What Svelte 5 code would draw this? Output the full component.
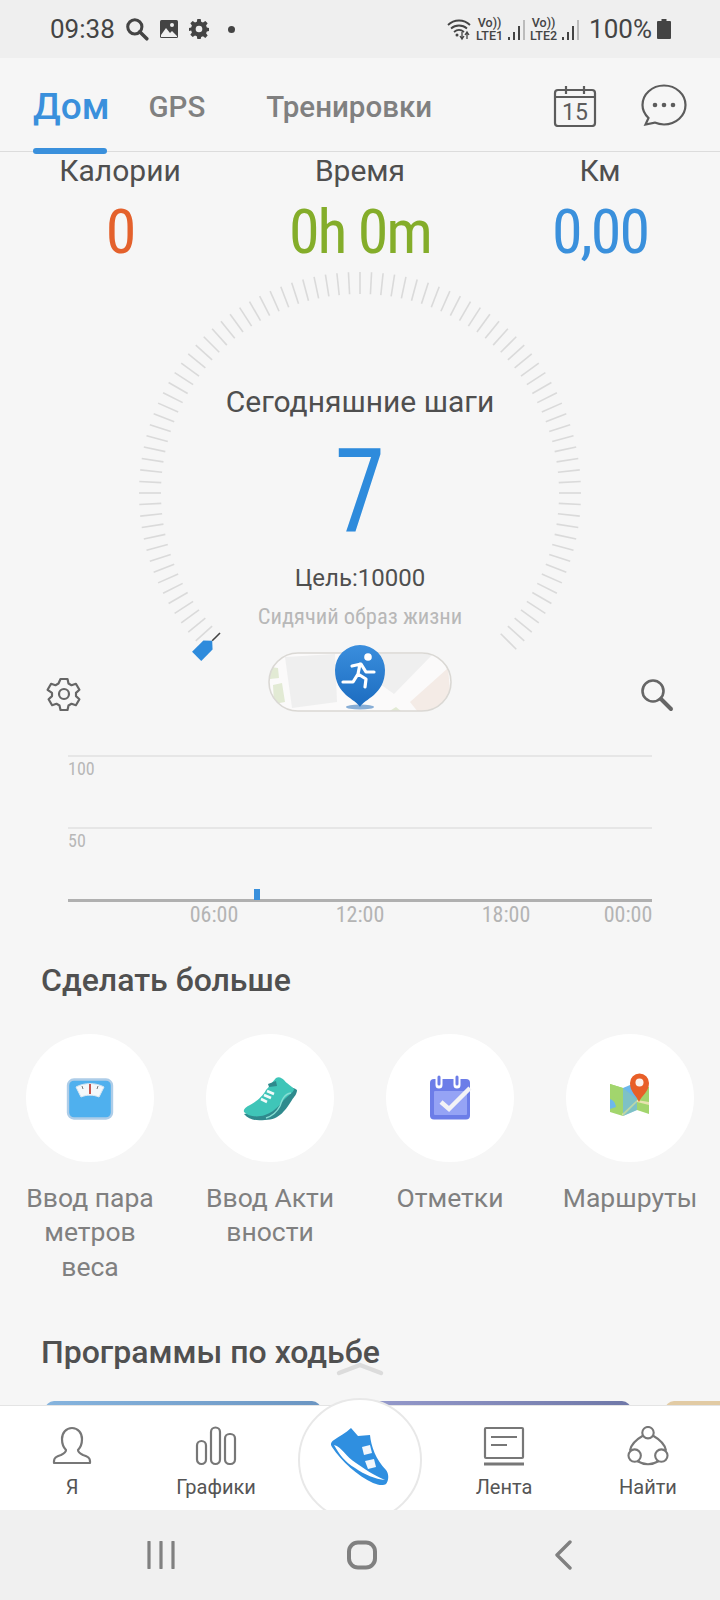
<script>
  const ticks = [];
  for (let a = -132; a <= 135; a += 3) ticks.push(a);

  const stats = [
    { label: 'Калории', value: '0', color: '#e4612c' },
    { label: 'Время', value: '0h 0m', color: '#84ad2a' },
    { label: 'Км', value: '0,00', color: '#3a90dc' }
  ];

  const hours = [
    { label: '06:00', at: 146 },
    { label: '12:00', at: 292 },
    { label: '18:00', at: 438 },
    { label: '00:00', at: 560 }
  ];
</script>

<div class="phone">
  <div class="status">
    <span class="time">09:38</span>
    <svg class="st-ic" width="24" height="24" viewBox="0 0 22 22"><circle cx="9" cy="9" r="6.500" fill="none" stroke="#444" stroke-width="2.800"/><path d="M13.500 13.500 20 20" stroke="#444" stroke-width="3.200" stroke-linecap="round"/></svg>
    <svg class="st-ic" width="20" height="20" viewBox="0 0 20 20"><rect x="1" y="1" width="18" height="18" rx="1.500" fill="#444"/><circle cx="13" cy="6" r="2" fill="#efefef"/><path d="M2 16l5-7 4 5 2-2 5 5v1H2z" fill="#efefef"/></svg>
    <svg class="st-ic" width="20" height="20" viewBox="0 0 24 24"><path fill="#444" fill-rule="evenodd" d="M10 0h4l.6 3.300 2.200.9L19.600 2.300l2.800 2.800-1.900 2.800.9 2.200L24 10.700v3.600l-2.600.6-.9 2.200 1.900 2.800-2.800 2.800-2.800-1.900-2.200.9L14 24h-4l-.6-3.300-2.200-.9-2.800 1.900-2.800-2.800 1.900-2.800-.9-2.200L0 14.300v-3.600l2.600-.6.9-2.200-1.900-2.800 2.800-2.800 2.800 1.900 2.200-.9zM12 8a4 4 0 1 0 0 8 4 4 0 0 0 0-8z"/></svg>
    <span class="st-dot"></span>
    <span class="st-fill"></span>
    <svg width="24" height="24" viewBox="0 0 24 24"><g fill="none" stroke="#444" stroke-width="1.800"><path d="M1 8c6-6 16-6 22 0"/><path d="M4 11.500c4.500-4 11.500-4 16 0"/><path d="M7 15c3-2.500 7-2.500 10 0"/></g><circle cx="10" cy="18" r="1.500" fill="#444"/><path d="M15 15v6m-2-2 2 3 2-3M20 22v-6m-2 2 2-3 2 3" stroke="#444" stroke-width="1.300" fill="none"/></svg>
    <div class="lte lte1"><span>Vo))</span><span>LTE1</span></div>
    <div class="bars"><i style="height:3px"></i><i style="height:8px"></i><i style="height:14px"></i><i class="dim" style="height:20px"></i></div>
    <div class="lte lte2"><span>Vo))</span><span>LTE2</span></div>
    <div class="bars"><i style="height:3px"></i><i style="height:8px"></i><i style="height:14px"></i><i class="dim" style="height:20px"></i></div>
    <span class="pct">100%</span>
    <svg class="batt" width="14" height="20" viewBox="0 0 14 20"><path fill="#444" d="M4.500 0h5v2H13a1 1 0 0 1 1 1v16a1 1 0 0 1-1 1H1a1 1 0 0 1-1-1V3a1 1 0 0 1 1-1h3.500z"/></svg>
  </div>

  <header class="tabs">
    <span class="tab active">Дом</span>
    <span class="tab gps">GPS</span>
    <span class="tab train">Тренировки</span>
    <svg class="cal" width="44" height="42" viewBox="0 0 44 42">
      <rect x="2" y="5" width="40" height="36" rx="3" fill="none" stroke="#5c5c5c" stroke-width="2.200"/>
      <path d="M2 12h40" stroke="#5c5c5c" stroke-width="2"/>
      <path d="M13 1v8M31 1v8M18 5h8" stroke="#5c5c5c" stroke-width="2.200"/>
      <text x="22" y="35" text-anchor="middle" class="cal-num">15</text>
    </svg>
    <svg class="chat" width="46" height="42" viewBox="0 0 46 42">
      <path d="M23 1.500c12 0 21.500 8.800 21.500 19.500S35 40.500 23 40.500c-3.500 0-6.500-.7-9.300-1.900L4.500 40.500l3-6.500C3.700 30.400 1.500 25.800 1.500 21 1.500 10.300 11 1.500 23 1.500z" fill="none" stroke="#5c5c5c" stroke-width="2.200"/>
      <circle cx="14" cy="21" r="2.300" fill="#5c5c5c"/><circle cx="23" cy="21" r="2.300" fill="#5c5c5c"/><circle cx="32" cy="21" r="2.300" fill="#5c5c5c"/>
    </svg>
  </header>

  <main class="content">
    <section class="stats">
      {#each stats as s}
        <div class="stat">
          <div class="stat-label">{s.label}</div>
          <div class="stat-value" style="color:{s.color}">{s.value}</div>
        </div>
      {/each}
    </section>

    <section class="gauge">
      <svg class="dial" width="460" height="400" viewBox="-230 -231 460 400">
        {#each ticks as a}
          <line x1="0" y1="-199" x2="0" y2="-221" stroke="#dadada" stroke-width="1.600" transform="rotate({a})"/>
        {/each}
        <g transform="rotate(-135)">
          <path d="M-6.500 -231 L6.500 -231 L6.500 -215 L0 -209 L-6.500 -215 Z" fill="#2e8bdc"/>
          <line x1="0" y1="-209" x2="0" y2="-198" stroke="#444" stroke-width="1.600"/>
        </g>
      </svg>
      <div class="g-title">Сегодняшние шаги</div>
      <div class="g-steps">7</div>
      <div class="g-goal">Цель:10000</div>
      <div class="g-level">Сидячий образ жизни</div>
    </section>

    <section class="tools">
      <svg class="tool-ic" width="36" height="36" viewBox="0 0 36 36"><path fill="none" stroke="#666" stroke-width="2.200" stroke-linejoin="round" d="M14.500 3h7l1 4.500 3 1.700 4.400-1.400 3.500 6-3.400 3.100v3.200l3.400 3.100-3.500 6-4.400-1.400-3 1.700-1 4.500h-7l-1-4.500-3-1.700-4.400 1.400-3.500-6 3.400-3.100v-3.200L1.600 13.800l3.500-6 4.400 1.400 3-1.700z"/><circle cx="18" cy="18" r="5" fill="none" stroke="#666" stroke-width="2.200"/></svg>
      <div class="pill">
        <svg width="184" height="60" viewBox="0 0 184 60">
          <defs>
            <clipPath id="pillclip"><rect x="1" y="1" width="182" height="58" rx="29"/></clipPath>
            <linearGradient id="pinfill" x1="0" y1="0" x2="0" y2="1"><stop offset="0" stop-color="#3a8edd"/><stop offset="1" stop-color="#1c6cc0"/></linearGradient>
          </defs>
          <g clip-path="url(#pillclip)">
            <rect width="184" height="60" fill="#fbfafa"/>
            <path d="M2 15l8 1 1 10-9 1zM5 33l9-2 3 19-11 2z" fill="#e2ead4"/>
            <path d="M17 5l50-3 2 48-45 6z" fill="#efefef"/>
            <path d="M106 2h59l-39 40-14-10z" fill="#efefef"/>
            <path d="M142 50l38-34 4 44h-34z" fill="#f4ebe6"/>
            <path d="M120 60l8-5 6 5z" fill="#e2ead4"/>
          </g>
          <rect x="1" y="1" width="182" height="58" rx="29" fill="none" stroke="#dad8d4" stroke-width="1.600"/>
          <ellipse cx="92" cy="55" rx="14" ry="2.500" fill="#2a6fb8" opacity=".55"/>
          <path d="M92 55C88 47 67 43 67 18a25 25 0 0 1 50 0c0 25-21 29-25 37z" fill="url(#pinfill)"/>
          <circle cx="100" cy="5" r="3.800" fill="#fff"/>
          <path d="M75 30h10l5-8 8 5-1 8M84 14l9-2 5 8 8 0M92 12l-2 10" fill="none" stroke="#fff" stroke-width="3.200" stroke-linecap="round" stroke-linejoin="round"/>
        </svg>
      </div>
      <svg class="tool-ic" width="36" height="36" viewBox="0 0 36 36"><circle cx="15" cy="15" r="10.500" fill="none" stroke="#666" stroke-width="2.600"/><path d="M23 23l10 10" stroke="#666" stroke-width="4" stroke-linecap="round"/></svg>
    </section>

    <section class="chart">
      <div class="grid-line"><span>100</span></div>
      <div class="grid-line"><span>50</span></div>
      <div class="axis"><i class="bar"></i></div>
      <div class="hours">
        {#each hours as h}
          <span style="left:{h.at}px">{h.label}</span>
        {/each}
      </div>
    </section>

    <h2 class="more-title">Сделать больше</h2>
    <section class="more">
      <div class="more-item">
        <div class="round">
          <svg width="64" height="64" viewBox="0 0 64 64">
            <rect x="10" y="13.500" width="44" height="39" rx="6" fill="#4fb0ee" stroke="#aecde8" stroke-width="2.400"/>
            <path d="M18 21c8-4.500 20-4.500 28 0l-5 10c-6-2.500-12-2.500-18 0z" fill="#f4f8fb" stroke="#d7e6f1"/>
            <path d="M32 18v10" stroke="#c2443c" stroke-width="1.800"/>
            <path d="M24 20l1 3M40 20l-1 3" stroke="#777" stroke-width="1"/>
          </svg>
        </div>
        <div class="more-label">Ввод пара<br>метров<br>веса</div>
      </div>
      <div class="more-item">
        <div class="round">
          <svg width="64" height="64" viewBox="0 0 64 64">
            <path d="M44 20c5 2 10 0 15 4 0 4-3 7-5 10-6 9-12 20-27 20-9 1-16 0-21-6 12-1 28-12 38-28z" fill="#2f8a8d"/>
            <path d="M38 12c3-2 6 0 8 2 3 4 8 6 10 9 0 3-4 5-7 8-6 5-10 14-22 18-9 3-17 1-21-3-1-3 2-5 6-7 6-3 13-9 16-15 3-3 6-8 10-12z" fill="#3fc5b8"/>
            <path d="M53 27c-7 1-9 7-11 13-3 6-8 10-14 12" fill="none" stroke="#86ded3" stroke-width="1.400"/>
            <path d="M30 18l8-3 1 5-8 1z" fill="#2f8a8d"/>
            <path d="M29 25l7 3M26 29l7 3M23 33l6 3" stroke="#f2fbfa" stroke-width="2.600"/>
          </svg>
        </div>
        <div class="more-label">Ввод Акти<br>вности</div>
      </div>
      <div class="more-item">
        <div class="round">
          <svg width="64" height="64" viewBox="0 0 64 64">
            <rect x="12" y="13" width="40" height="40.500" rx="4" fill="#6c7de8"/>
            <rect x="16" y="25" width="33" height="24" rx="1" fill="#95a3f5"/>
            <path d="M21 10v9M39 10v9" stroke="#fff" stroke-width="7" stroke-linecap="round"/>
            <path d="M21 11v7M39 11v7" stroke="#6c7de8" stroke-width="3" stroke-linecap="round"/>
            <path d="M23 36l8 7 21-21" fill="none" stroke="#f3f3f6" stroke-width="4.500"/>
          </svg>
        </div>
        <div class="more-label">Отметки</div>
      </div>
      <div class="more-item">
        <div class="round">
          <svg width="64" height="64" viewBox="0 0 64 64">
            <path d="M12 18l13 4v28l-13-4z" fill="#a2d56d"/>
            <path d="M25 22l14-6v28l-14 6z" fill="#6db8ec"/>
            <path d="M12 30c4 0 8 4 13 3v-11l-13-4z" fill="#a2d56d"/>
            <path d="M12 33c3 1 5 3 6 8l-6 2z" fill="#6db8ec"/>
            <path d="M39 16l12 5v27l-12-4z" fill="#a2d56d"/>
            <path d="M25 50l14-14 12 3v-3l-12-2-15 14z" fill="#e8e3b0"/>
            <path d="M25 22v28l14-6V33z" fill="#8fc9a0" opacity=".5"/>
            <path d="M41 36C38 29 32 26 32 17a9.500 9.500 0 0 1 19 0c0 9-7 12-10 19z" fill="#e85f28"/>
            <circle cx="41.500" cy="16.500" r="4" fill="#fbf3ee"/>
          </svg>
        </div>
        <div class="more-label">Маршруты</div>
      </div>
    </section>

    <h2 class="prog-title">Программы по ходьбе</h2>
    <svg class="chevron" width="48" height="14" viewBox="0 0 48 14"><path d="M3 11 24 3l21 8" fill="none" stroke="#dcdcdc" stroke-width="4.500" stroke-linecap="round" stroke-linejoin="round"/></svg>
    <section class="cards">
      <div class="card c1"></div>
      <div class="card c2"></div>
      <div class="card c3"></div>
    </section>
  </main>

  <nav class="nav">
    <div class="nav-item">
      <svg width="40" height="40" viewBox="0 0 40 40"><path d="M20 2c6 0 10 5 10 11 0 5-2 9-4 11 0 2 1 3 5 5 4 1 7 3 7 6v2H2v-2c0-3 3-5 7-6 4-2 5-3 5-5-2-2-4-6-4-11C10 7 14 2 20 2z" fill="none" stroke="#777" stroke-width="2.200" stroke-linejoin="round"/></svg>
      <span>Я</span>
    </div>
    <div class="nav-item">
      <svg width="44" height="40" viewBox="0 0 44 40"><g fill="none" stroke="#777" stroke-width="2.200"><rect x="3" y="15" width="9" height="23" rx="4.500"/><rect x="17" y="1.500" width="9" height="36.500" rx="4.500"/><rect x="31" y="8" width="10" height="30" rx="4.500"/></g></svg>
      <span>Графики</span>
    </div>
    <div class="nav-item center">
      <span class="nav-circle"></span>
      <svg class="big-shoe" width="58" height="58" viewBox="0 0 58 58">
        <path d="M20 0l7 8 12-1c1 11 6 25 16 35 3 4 3 10 0 14-3 2-8 1-13-1C27 48 10 33 1 19c-2-3-1-5 2-7C8 8 15 5 20 0z" fill="#2f8fe0"/>
        <path d="M3 17c8 2 12 12 22 18 9 6 17 12 29 17-10-1-20-5-30-12C14 34 8 26 3 17z" fill="#fff"/>
        <path d="M31 19l8-2 2 8-8 2zM34 33l9-2 2 8-8 2z" fill="#f2f7fc"/>
      </svg>
    </div>
    <div class="nav-item">
      <svg width="42" height="40" viewBox="0 0 42 40"><g fill="none" stroke="#777" stroke-width="2.200"><rect x="2" y="2" width="38" height="30" rx="1"/><path d="M8 11h26M8 19h16"/></g><path d="M1 38h40" stroke="#777" stroke-width="3"/></svg>
      <span>Лента</span>
    </div>
    <div class="nav-item">
      <svg width="42" height="40" viewBox="0 0 44 42"><g fill="none" stroke="#777" stroke-width="2.200"><circle cx="22" cy="7" r="6"/><circle cx="8" cy="31" r="6.500"/><circle cx="36" cy="31" r="6.500"/><path d="M17 10C10 14 4 19 3 26M27 10c7 4 13 9 14 16M11 37c7 4 15 4 22 0"/></g></svg>
      <span>Найти</span>
    </div>
  </nav>

  <footer class="softkeys">
    <svg width="28" height="28" viewBox="0 0 28 28"><path d="M2 1v26M14 1v26M26 1v26" stroke="#808080" stroke-width="3.200" stroke-linecap="round"/></svg>
    <svg width="32" height="30" viewBox="0 0 32 30"><rect x="3" y="2.500" width="26" height="25" rx="9" fill="none" stroke="#808080" stroke-width="4"/></svg>
    <svg width="18" height="30" viewBox="0 0 18 30"><path d="M16 2 3 15l13 13" fill="none" stroke="#808080" stroke-width="3.400" stroke-linecap="round" stroke-linejoin="round"/></svg>
  </footer>
</div>

<style>
  :global(body) {
    background: #f6f6f6;
  }

  .phone {
    width: 720px;
    height: 1600px;
    display: flex;
    flex-direction: column;
    overflow: hidden;
    background: #f6f6f6;
    font-family: Roboto, "Noto Sans", sans-serif;
  }

  /* status bar */
  .status {
    height: 58px;
    flex: none;
    background: #efefef;
    display: flex;
    align-items: center;
    padding: 0 49px 0 50px;
    color: #444;
  }

  .time {
    font-size: 26px;
    margin-right: 10px;
  }

  .st-ic {
    margin-right: 10px;
  }

  .st-dot {
    width: 7px;
    height: 7px;
    border-radius: 50%;
    background: #444;
    margin-left: 9px;
  }

  .st-fill {
    flex: 1;
  }

  .lte {
    display: flex;
    flex-direction: column;
    align-items: center;
    font-size: 12.500px;
    line-height: 13px;
    font-weight: 500;
    margin-left: 5px;
  }

  .bars {
    display: flex;
    align-items: flex-end;
    gap: 3px;
    margin-left: 5px;
    height: 22px;
  }

  .bars i {
    width: 2px;
    background: #444;
  }

  .bars i.dim {
    background: #bbb;
  }

  .pct {
    font-size: 26px;
    margin-left: 10px;
  }

  .batt {
    margin-left: 5px;
  }

  /* tabs */
  .tabs {
    height: 94px;
    flex: none;
    display: flex;
    align-items: center;
    position: relative;
    border-bottom: 1px solid #dcdcdc;
    box-sizing: border-box;
    padding: 4px 33px 0 33px;
  }

  .tab {
    font-size: 32px;
    font-weight: 500;
    color: #808080;
    position: relative;
  }

  .tab.gps {
    font-size: 29.500px;
    margin-left: 39px;
  }

  .tab.train {
    font-size: 29.500px;
    margin-left: 61px;
  }

  .tab.active {
    font-size: 37px;
    color: #3a90dc;
  }

  .tab.active::after {
    content: "";
    position: absolute;
    left: 0;
    right: 2px;
    top: 63px;
    height: 6px;
    border-radius: 3px;
    background: #3a90dc;
  }

  .cal {
    margin-left: auto;
    transform: translateY(-1px);
  }

  .cal-num {
    font-size: 23px;
    font-family: Roboto, sans-serif;
    fill: #5c5c5c;
  }

  .chat {
    margin-left: 44px;
    transform: translateY(-2px);
  }

  .content {
    flex: 1;
    min-height: 0;
    overflow: hidden;
    display: flex;
    flex-direction: column;
    position: relative;
  }

  /* stats */
  .stats {
    display: grid;
    flex: none;
    grid-template-columns: repeat(3, 1fr);
    text-align: center;
    padding-top: 1px;
  }

  .stat-label {
    font-size: 30px;
    line-height: 36px;
    color: #4f4f4f;
  }

  .stat-value {
    font-size: 62px;
    line-height: 70px;
    margin-top: 8px;
    font-stretch: 75%;
    letter-spacing: -2px;
  }

  /* gauge */
  .gauge {
    position: relative;
    height: 384.500px;
    flex: none;
    display: flex;
    flex-direction: column;
    align-items: center;
  }

  .dial {
    position: absolute;
    left: 130px;
    top: -5px;
  }

  .g-title {
    font-size: 30px;
    line-height: 36px;
    color: #4f4f4f;
    margin-top: 117px;
    position: relative;
  }

  .g-steps {
    font-size: 116px;
    line-height: 116px;
    color: #2e8bdc;
    margin-top: 14px;
    font-stretch: 75%;
    transform: scaleX(.88);
    position: relative;
  }

  .g-goal {
    font-size: 24px;
    line-height: 30px;
    color: #4f4f4f;
    margin-top: 13px;
    position: relative;
  }

  .g-level {
    font-size: 22.500px;
    line-height: 30px;
    color: #b8b8b8;
    font-stretch: 75%;
    margin-top: 8px;
    position: relative;
  }

  /* gear, pill, search */
  .tools {
    display: flex;
    flex: none;
    align-items: flex-start;
    justify-content: space-between;
    padding: 0 46px;
    height: 60px;
  }

  .tool-ic {
    margin-top: 24px;
  }

  .pill svg {
    overflow: visible;
    display: block;
  }

  /* chart */
  .chart {
    margin: 43px 68px 0;
    height: 160px;
    flex: none;
    position: relative;
  }

  .grid-line {
    height: 72px;
    border-top: 2px solid #e6e6e6;
    box-sizing: border-box;
    font-size: 18px;
    color: #b8b8b8;
    font-stretch: 75%;
  }

  .grid-line span {
    display: block;
    margin-top: 1px;
  }

  .axis {
    height: 3px;
    background: #b0b0b0;
    position: relative;
  }

  .bar {
    position: absolute;
    left: 186px;
    bottom: 2px;
    width: 6px;
    height: 11px;
    background: #3a90dc;
  }

  .hours {
    position: relative;
    height: 24px;
    font-size: 22px;
    color: #b4b4b4;
    font-stretch: 75%;
  }

  .hours span {
    position: absolute;
    top: 0;
    transform: translateX(-50%);
  }

  /* sections */
  .more-title,
  .prog-title {
    margin: 0;
    font-size: 32px;
    font-weight: 500;
    color: #505050;
    padding-left: 41px;
    line-height: 40px;
    flex: none;
  }

  .more-title {
    margin-top: 45px;
  }

  .more {
    display: grid;
    flex: none;
    grid-template-columns: repeat(4, 1fr);
    margin-top: 34px;
    height: 267px;
  }

  .more-item {
    display: flex;
    flex-direction: column;
    align-items: center;
  }

  .round {
    width: 128px;
    height: 128px;
    border-radius: 50%;
    background: #fff;
    display: flex;
    align-items: center;
    justify-content: center;
  }

  .more-label {
    margin-top: 19px;
    font-size: 26.500px;
    line-height: 34.500px;
    text-align: center;
    color: #808080;
    white-space: nowrap;
  }

  .prog-title {
    margin-top: 31px;
  }

  .chevron {
    position: absolute;
    left: 336px;
    top: 1210px;
  }

  .cards {
    display: flex;
    flex: none;
    gap: 14px;
    margin-top: 29px;
    padding-left: 45px;
  }

  .card {
    flex: none;
    height: 90px;
    border-radius: 9px;
  }

  .c1 {
    width: 276px;
    background: linear-gradient(90deg, #86b4de, #6b95c2);
  }

  .c2 {
    width: 296px;
    background: linear-gradient(90deg, #9a9ed0, #6f78a8);
  }

  .c3 {
    width: 276px;
    margin-left: 20px;
    background: #e2cba4;
  }

  /* bottom nav */
  .nav {
    height: 105px;
    flex: none;
    background: #fff;
    border-top: 1px solid #e4e4e4;
    box-sizing: border-box;
    display: grid;
    grid-template-columns: repeat(5, 1fr);
    position: relative;
    clip-path: inset(-20px 0 0 0);
  }

  .nav-item {
    display: flex;
    flex-direction: column;
    align-items: center;
    padding-top: 20px;
    position: relative;
    font-size: 20px;
    color: #555;
  }

  .nav-item span {
    margin-top: 8px;
    line-height: 26px;
  }

  .nav-circle {
    position: absolute;
    left: 10px;
    top: -8px;
    width: 124px;
    height: 124px;
    margin: 0 !important;
    border-radius: 50%;
    background: #fff;
    border: 2px solid #e8e8e8;
    box-sizing: border-box;
  }

  .big-shoe {
    position: relative;
    margin-top: 2px;
  }

  /* android keys */
  .softkeys {
    height: 90px;
    flex: none;
    box-sizing: border-box;
    background: #f0f0f0;
    display: grid;
    grid-template-columns: repeat(3, 1fr);
    justify-items: center;
    align-items: center;
    padding: 0 57px 0 60px;
  }
</style>
